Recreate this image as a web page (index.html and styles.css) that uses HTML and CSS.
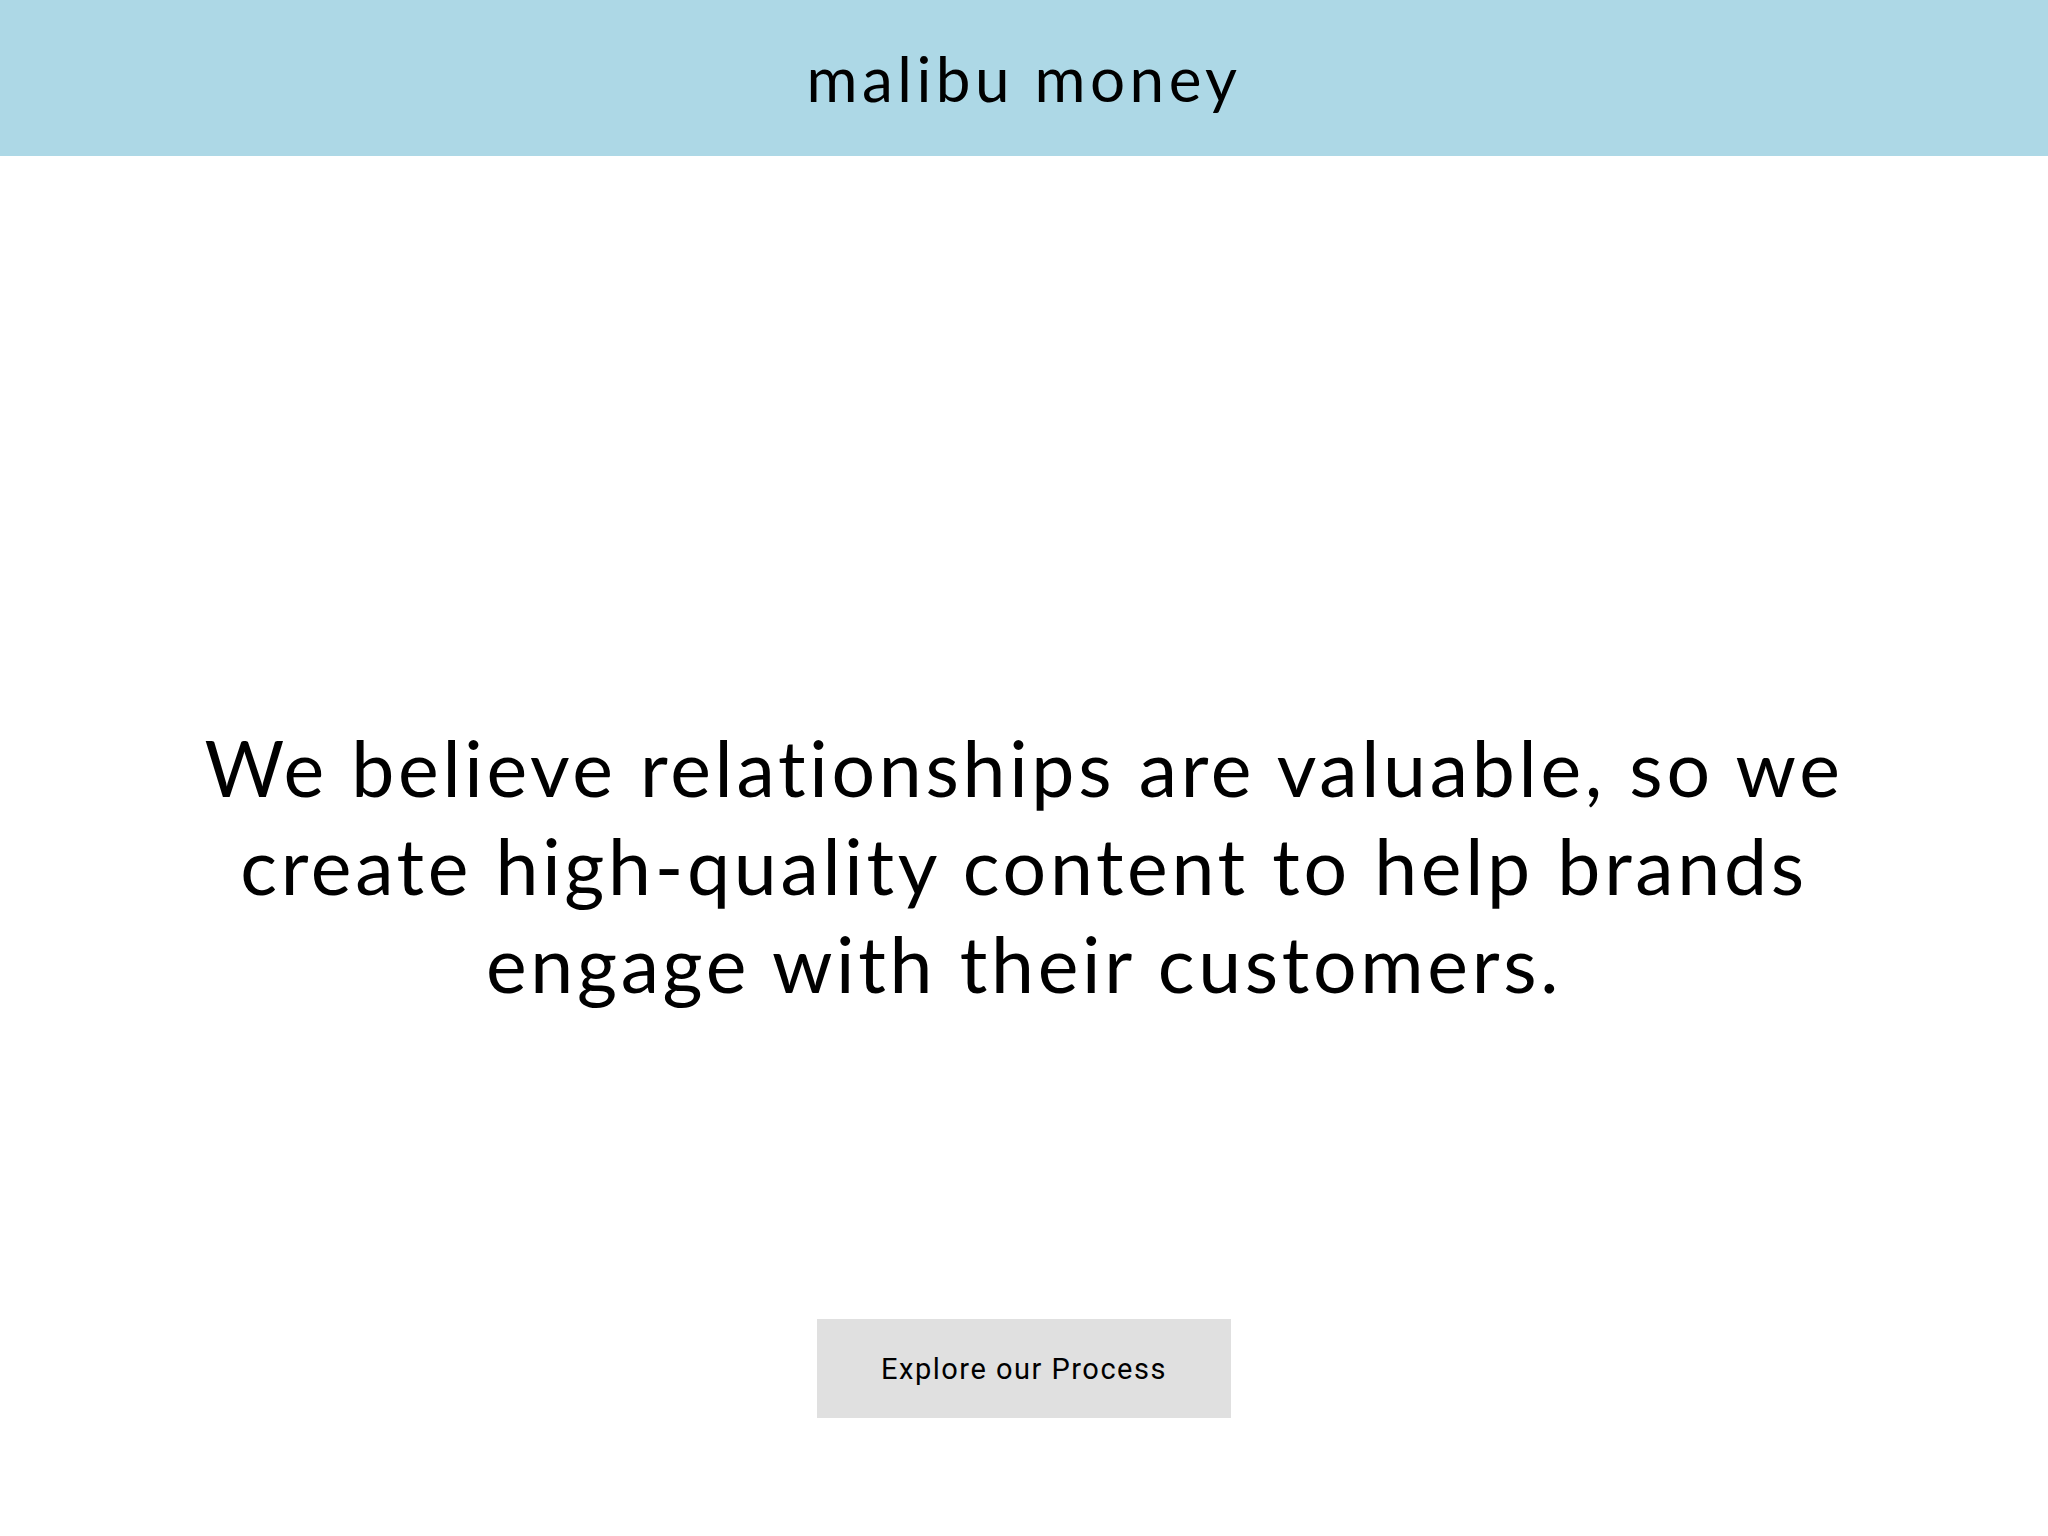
FILE: index.html
```html
<!DOCTYPE html>
<html lang="en">
<head>
<meta charset="utf-8">
<title>malibu money</title>
<link rel="stylesheet" href="styles.css">
</head>
<body>
<header class="site-header">
  <h1 class="brand">malibu money</h1>
</header>
<main class="hero">
  <p class="statement">We believe relationships are valuable, so we<br>create high-quality content to help brands<br>engage with their customers.</p>
  <a class="cta" href="#">Explore our Process</a>
</main>
</body>
</html>
```

FILE: styles.css
```css
html, body {
  margin: 0;
  padding: 0;
  background: #ffffff;
  color: #000000;
  font-family: "Lato", "Liberation Sans", sans-serif;
}

.site-header {
  height: 156px;
  background: #add8e6;
  display: flex;
  align-items: center;
  justify-content: center;
}

.brand {
  margin: 0;
  font-weight: 400;
  font-size: 62px;
  letter-spacing: 4.5px;
  line-height: 1;
}

.hero {
  display: flex;
  flex-direction: column;
  align-items: center;
  padding-top: 562px;
}

.statement {
  margin: 0;
  text-align: center;
  font-size: 77px;
  line-height: 98px;
  letter-spacing: 3.7px;
}

.cta {
  margin-top: 307px;
  width: 414px;
  height: 99px;
  display: flex;
  align-items: center;
  justify-content: center;
  background: #e0e0e0;
  color: #000;
  text-decoration: none;
  font-family: "Roboto", sans-serif;
  font-size: 29px;
  letter-spacing: 1.5px;
}
```
